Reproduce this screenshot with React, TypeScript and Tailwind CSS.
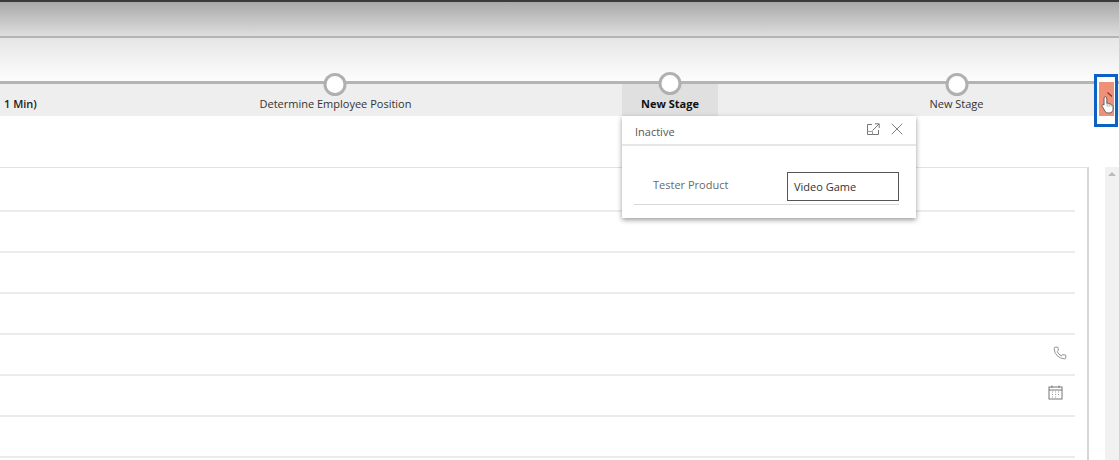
import { Phone, X } from 'lucide-react';

const font = { fontFamily: '"Open Sans", "Liberation Sans", sans-serif' };

function StageDot({ inline }: { inline?: boolean }) {
  return (
    <span
      className={`absolute ${inline ? 'top-[-23px]' : 'top-[-12px]'} left-1/2 -translate-x-1/2 w-[23px] h-[23px] rounded-full border-[3.5px] border-[#b0b0b0] bg-white`}
    />
  );
}

function PopoutIcon() {
  return (
    <svg width="14" height="13" viewBox="0 0 14 13" fill="none" stroke="#777" strokeWidth="1">
      <path d="M6 1.5H1.5v10h11V7" />
      <path d="M6.500 7.500L13 1M9 .8h4.200V5" />
      <path d="M1.500 8.500h5v3" stroke="#999" />
    </svg>
  );
}

function CalendarIcon() {
  return (
    <svg width="15" height="15" viewBox="0 0 15 15" fill="none" stroke="#777" strokeWidth="1">
      <rect x="1" y="2" width="13" height="12" />
      <path d="M1 5h13M4 .5V3M11 .5V3" />
      <path d="M4 7h1M7 7h1M10 7h1M4 9.500h1M7 9.500h1M10 9.500h1M4 12h1M7 12h1" stroke="#999" />
    </svg>
  );
}

function HandCursor() {
  return (
    <svg width="14" height="24" viewBox="0 0 16 22" className="absolute left-[4px] top-[16px]">
      <path
        d="M5 1.500c1 0 1.600.7 1.600 1.600v6l.6-.2c.7-.2 1.300.1 1.500.5.7-.2 1.400 0 1.700.6.7-.2 1.500.1 1.800.8.8 0 1.500.6 1.500 1.500v3.600c0 2.200-1.600 4.100-4 4.100H7.600c-1.200 0-2.100-.6-2.800-1.600L1.400 12.600c-.5-.7-.3-1.500.3-1.900.6-.4 1.300-.2 1.800.3V3.100c0-.9.6-1.600 1.500-1.600z"
        fill="#fff"
        stroke="#333"
        strokeWidth=".8"
      />
      <path d="M7 9v4M9.300 9.300V13M11.600 10v3" stroke="#777" strokeWidth=".7" />
    </svg>
  );
}

function Chevron() {
  return (
    <svg width="6" height="8" viewBox="0 0 6 8" fill="none" className="absolute left-[10px] top-[15px]">
      <path d="M.5 .5l4.500 4" stroke="#8a2a22" strokeWidth="1.200" />
    </svg>
  );
}

const rowHeights = ['h-[44px]', 'h-[41px]', 'h-[41px]', 'h-[41px]', 'h-[41px]', 'h-[41px]', 'h-[41px]'];

export default function App() {
  return (
    <div className="w-[1119px] h-[460px] overflow-hidden bg-white flex flex-col relative" style={font}>
      {/* window chrome */}
      <div className="h-[2px] bg-[#3a3a3a] shrink-0" />
      <div className="h-[34px] shrink-0 bg-gradient-to-b from-[#a9a9a9] to-[#dedede]" />
      <div className="h-[2px] bg-[#b4b4b4] shrink-0" />
      <div className="h-[43px] shrink-0 bg-gradient-to-b from-[#e6e6e6] to-[#fdfdfd]" />

      {/* stage bar */}
      <div className="h-[3px] bg-[#b4b4b4] shrink-0" />
      <div className="h-[32px] shrink-0 bg-[#eeeeee] flex text-[11px] text-[#333]">
        <div className="w-[40px] pl-[4px] pt-[12px] leading-[16px] font-semibold text-[#222] whitespace-nowrap">1 Min)</div>
        <div className="w-[582px] pl-[9px] pt-[12px] leading-[16px] text-center relative">
          <span className="relative inline-block whitespace-nowrap">
            Determine Employee Position
            <StageDot inline />
          </span>
        </div>
        <div className="w-[96px] pt-[12px] leading-[16px] text-center bg-[#e0e0e0] font-bold text-[#111] relative">
          <StageDot />
          New Stage
        </div>
        <div className="w-[377px] pl-[100px] pt-[12px] leading-[16px] text-center">
          <span className="relative inline-block whitespace-nowrap">
            New Stage
            <StageDot inline />
          </span>
        </div>
      </div>

      {/* next-stage button */}
      <div className="absolute left-[1094px] top-[74px] w-[24px] h-[53px] border-[3px] border-[#0b62c4] bg-white">
        <div className="ml-[2px] mt-[5px] w-[15px] h-[34px] bg-[#ef9079]" />
        <Chevron />
        <HandCursor />
      </div>

      {/* form body */}
      <div className="flex pt-[51px] flex-1 min-h-0">
        <div className="w-[1089px] shrink-0 border-t border-r-2 border-[#e2e2e2] border-r-[#d6d6d6]">
          {rowHeights.map((h, i) => (
            <div key={i} className={`${h} w-[1075px] border-b-2 border-[#ebebeb] flex items-center justify-end relative`}>
              {i === 4 && <Phone size={14} strokeWidth={1.2} className="mr-[8px] mb-[4px] text-[#666]" />}
              {i === 5 && <div className="mr-[12px] mb-[6px]"><CalendarIcon /></div>}
            </div>
          ))}
        </div>
        <div className="ml-[16px] w-[14px] bg-[#f1f1f1] flex justify-center pt-[5px]">
          <span className="w-0 h-0 border-l-[4px] border-r-[4px] border-b-[4px] border-l-transparent border-r-transparent border-b-[#bbb]" />
        </div>
      </div>

      {/* stage flyout */}
      <div className="absolute left-[622px] top-[116px] w-[294px] h-[102px] bg-white shadow-[0_2px_5px_rgba(0,0,0,0.4)]">
        <div className="h-[30px] border-b-2 border-[#e6e6e6] flex items-center justify-between pl-[13px] pr-[9px]">
          <span className="text-[11px] text-[#555] mt-[5px]">Inactive</span>
          <div className="flex items-center gap-[7px] text-[#666] mb-[2px]">
            <PopoutIcon />
            <X size={20} strokeWidth={1} />
          </div>
        </div>
        <div className="ml-[12px] w-[265px] mt-[26px] h-[33px] border-b border-[#d8d8d8] relative">
          <span className="absolute left-[19px] top-[5px] text-[11px] text-[#6a6a6a]">Tester Product</span>
        </div>
        <div className="absolute left-[165px] top-[56px] w-[112px] h-[29px] border border-[#555] flex items-center pl-[6px] pt-[2px] text-[11px] text-[#333]">
          Video Game
        </div>
      </div>
    </div>
  );
}
